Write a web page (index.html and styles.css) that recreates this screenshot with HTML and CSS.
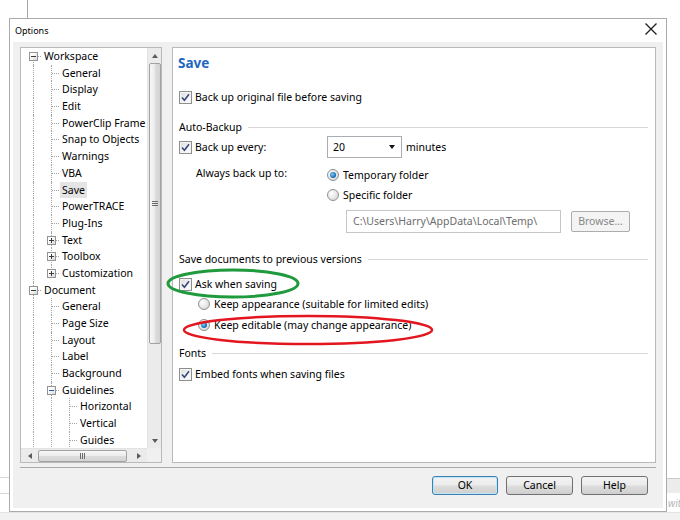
FILE: index.html
```html
<!DOCTYPE html>
<html>
<head>
<meta charset="utf-8">
<title>Options</title>
<link rel="stylesheet" href="styles.css">
</head>
<body>
<div class="bg-line"></div>
<div class="bg-left"></div>
<div class="bg-right"><span>wit</span></div>
<div class="bg-bottom"></div>

<div class="dialog">
  <div class="titlebar">
    <span class="title">Options</span>
    <svg class="close" width="12" height="12" viewBox="0 0 12 12"><path d="M0.5 0.5 L11.5 11.5 M11.5 0.5 L0.5 11.5" stroke="#1e1e1e" stroke-width="1.3" fill="none"/></svg>
  </div>
  <div class="client">
    <div class="main">
      <div class="tree">
        <div class="list">
          <div class="row"><span class="c vb h"><span class="bx"></span></span><span class="lbl">Workspace</span></div>
          <div class="row"><span class="c v"></span><span class="c v h"></span><span class="lbl">General</span></div>
          <div class="row"><span class="c v"></span><span class="c v h"></span><span class="lbl">Display</span></div>
          <div class="row"><span class="c v"></span><span class="c v h"></span><span class="lbl">Edit</span></div>
          <div class="row"><span class="c v"></span><span class="c v h"></span><span class="lbl">PowerClip Frame</span></div>
          <div class="row"><span class="c v"></span><span class="c v h"></span><span class="lbl">Snap to Objects</span></div>
          <div class="row"><span class="c v"></span><span class="c v h"></span><span class="lbl">Warnings</span></div>
          <div class="row"><span class="c v"></span><span class="c v h"></span><span class="lbl">VBA</span></div>
          <div class="row"><span class="c v"></span><span class="c v h"></span><span class="lbl sel">Save</span></div>
          <div class="row"><span class="c v"></span><span class="c v h"></span><span class="lbl">PowerTRACE</span></div>
          <div class="row"><span class="c v"></span><span class="c v h"></span><span class="lbl">Plug-Ins</span></div>
          <div class="row"><span class="c v"></span><span class="c v h"><span class="bx plus"></span></span><span class="lbl">Text</span></div>
          <div class="row"><span class="c v"></span><span class="c v h"><span class="bx plus"></span></span><span class="lbl">Toolbox</span></div>
          <div class="row"><span class="c v"></span><span class="c vt h"><span class="bx plus"></span></span><span class="lbl">Customization</span></div>
          <div class="row"><span class="c v h"><span class="bx"></span></span><span class="lbl">Document</span></div>
          <div class="row"><span class="c v"></span><span class="c v h"></span><span class="lbl">General</span></div>
          <div class="row"><span class="c v"></span><span class="c v h"></span><span class="lbl">Page Size</span></div>
          <div class="row"><span class="c v"></span><span class="c v h"></span><span class="lbl">Layout</span></div>
          <div class="row"><span class="c v"></span><span class="c v h"></span><span class="lbl">Label</span></div>
          <div class="row"><span class="c v"></span><span class="c v h"></span><span class="lbl">Background</span></div>
          <div class="row"><span class="c v"></span><span class="c v h"><span class="bx blue"></span></span><span class="lbl">Guidelines</span></div>
          <div class="row"><span class="c v"></span><span class="c v"></span><span class="c v h"></span><span class="lbl">Horizontal</span></div>
          <div class="row"><span class="c v"></span><span class="c v"></span><span class="c v h"></span><span class="lbl">Vertical</span></div>
          <div class="row"><span class="c v"></span><span class="c v"></span><span class="c v h"></span><span class="lbl">Guides</span></div>
        </div>
        <div class="vscroll">
          <div class="sarea"><span class="tri up"></span></div>
          <div class="vthumb"><span class="grip-h"></span></div>
          <div class="vspace"></div>
          <div class="sarea"><span class="tri down"></span></div>
        </div>
        <div class="hscroll">
          <div class="harea"><span class="tri left"></span></div>
          <div class="hthumb"><span class="grip-v"></span></div>
          <div class="hspace"></div>
          <div class="harea"><span class="tri right"></span></div>
        </div>
        <div class="corner"></div>
      </div>

      <div class="page">
        <div class="heading">Save</div>
        <div class="opt r-orig"><span class="cb"><svg width="11" height="11" viewBox="0 0 11 11"><path d="M2 5.5 L4.4 8.2 L9 2.2" stroke="#34457a" stroke-width="1.5" fill="none"/></svg></span><span>Back up original file before saving</span></div>
        <div class="grp g-auto"><span>Auto-Backup</span><i></i></div>
        <div class="every">
          <div class="opt every-cb"><span class="cb"><svg width="11" height="11" viewBox="0 0 11 11"><path d="M2 5.5 L4.4 8.2 L9 2.2" stroke="#34457a" stroke-width="1.5" fill="none"/></svg></span><span>Back up every:</span></div>
          <div class="combo"><span>20</span><b class="tri down dk"></b></div>
          <span class="unit">minutes</span>
        </div>
        <div class="always">
          <div class="always-lbl">Always back up to:</div>
          <div class="radios">
            <div class="opt"><span class="rb on"></span><span>Temporary folder</span></div>
            <div class="opt"><span class="rb"></span><span>Specific folder</span></div>
          </div>
        </div>
        <div class="folder">
          <div class="path">C:\Users\Harry\AppData\Local\Temp\</div>
          <div class="browse">Browse...</div>
        </div>
        <div class="grp g-save"><span>Save documents to previous versions</span><i></i></div>
        <div class="opt r-ask"><span class="cb"><svg width="11" height="11" viewBox="0 0 11 11"><path d="M2 5.5 L4.4 8.2 L9 2.2" stroke="#34457a" stroke-width="1.5" fill="none"/></svg></span><span>Ask when saving</span></div>
        <div class="opt r-keep"><span class="rb"></span><span>Keep appearance (suitable for limited edits)</span></div>
        <div class="opt r-keep r-keep2"><span class="rb on"></span><span>Keep editable (may change appearance)</span></div>
        <div class="grp g-fonts"><span>Fonts</span><i></i></div>
        <div class="opt r-embed"><span class="cb"><svg width="11" height="11" viewBox="0 0 11 11"><path d="M2 5.5 L4.4 8.2 L9 2.2" stroke="#34457a" stroke-width="1.5" fill="none"/></svg></span><span>Embed fonts when saving files</span></div>
      </div>
    </div>
    <div class="sep"></div>
    <div class="buttons">
      <div class="btn def">OK</div>
      <div class="btn">Cancel</div>
      <div class="btn">Help</div>
    </div>
  </div>
</div>

<svg class="marks" width="680" height="520" viewBox="0 0 680 520">
  <ellipse cx="233" cy="283.5" rx="65" ry="13.5" fill="none" stroke="#1f9a3c" stroke-width="3"/>
  <ellipse cx="308" cy="330" rx="124" ry="14" fill="none" stroke="#e3151f" stroke-width="2.5"/>
</svg>
</body>
</html>
```

FILE: styles.css
```css
* { box-sizing: border-box; }
html, body { margin: 0; padding: 0; }
body {
  width: 680px;
  height: 520px;
  overflow: hidden;
  position: relative;
  background: #fff;
  font-family: "Noto Sans", "DejaVu Sans", sans-serif;
  font-size: 10.5px;
  color: #000;
}

/* desktop behind the window */
.bg-line { position: absolute; left: 27px; top: 0; width: 1px; height: 18px; background: #a6a6a6; }
.bg-left { position: absolute; left: 0; top: 477px; width: 9px; height: 17px; border-top: 1px solid #d6d6d6; border-bottom: 1px solid #d6d6d6; }
.bg-right { position: absolute; left: 667px; top: 478px; width: 13px; height: 34px; overflow: hidden; border-top: 1px solid #c9c9c9; background: linear-gradient(#ececec 0, #ececec 14px, #fff 14px); }
.bg-right span { position: absolute; left: 1px; top: 18px; font-style: italic; color: #b5b5b5; font-size: 10px; line-height: 12px; }
.bg-bottom { position: absolute; left: 0; top: 512px; width: 680px; height: 8px; background: #f2f2f2; border-top: 1px solid #e2e2e2; }

/* window */
.dialog {
  position: absolute;
  left: 9px;
  top: 18px;
  width: 658px;
  height: 494px;
  border: 1px solid #ababab;
  background: #fff;
  display: flex;
  flex-direction: column;
}
.titlebar {
  height: 23px;
  flex: none;
  display: flex;
  align-items: center;
  justify-content: space-between;
  padding: 0 9px 1px 5px;
}
.title { font-size: 9px; color: #000; }
.close { display: block; margin-top: -2px; }

.client {
  flex: 1;
  margin: 0 3px 3px 3px;
  background: #f0f0f0;
  padding: 5px 7px 0 7px;
  display: flex;
  flex-direction: column;
}
.main { display: flex; height: 416px; gap: 10px; flex: none; }

/* tree */
.tree {
  width: 142px;
  flex: none;
  border: 1px solid #b9b9b9;
  background: #fff;
  display: grid;
  grid-template-columns: 126px 14px;
  grid-template-rows: 400px 14px;
}
.list { overflow: hidden; padding-left: 3px; }
.row { display: flex; height: 16.7px; white-space: nowrap; }
.c { width: 18px; flex: none; position: relative; }
.c.v::before, .c.vt::before, .c.vb::before {
  content: ""; position: absolute; left: 9px; border-left: 1px dotted #a3a3a3;
}
.c.v::before { top: 0; bottom: 0; }
.c.vt::before { top: 0; height: 9px; }
.c.vb::before { top: 8px; bottom: 0; }
.c.h::after {
  content: ""; position: absolute; left: 10px; width: 7px; top: 8px; border-top: 1px dotted #a3a3a3;
}
.bx {
  position: absolute; left: 5px; top: 4px; width: 9px; height: 9px; z-index: 1;
  border: 1px solid #939393;
  background: linear-gradient(135deg, #ffffff 30%, #d8d8d8);
}
.bx::before { content: ""; position: absolute; left: 1px; top: 3px; width: 5px; height: 1px; background: #3a3a3a; }
.bx.plus::after { content: ""; position: absolute; left: 3px; top: 1px; width: 1px; height: 5px; background: #3a3a3a; }
.bx.blue::before { background: #2c57a8; }
.lbl { line-height: 16.7px; padding: 0 2px; }
.lbl.sel { background: #e4e4e4; }

.vscroll {
  background: #ebebeb;
  border-left: 1px solid #e3e3e3;
  display: flex;
  flex-direction: column;
  align-items: center;
}
.sarea { height: 15px; width: 100%; flex: none; display: flex; align-items: center; justify-content: center; }
.vthumb {
  width: 12px; height: 281px; flex: none;
  border: 1px solid #a2a2a2; border-radius: 2px;
  background: linear-gradient(to right, #f7f7f7, #ececec 45%, #dcdcdc 55%, #d4d4d4);
  display: flex; align-items: center; justify-content: center;
}
.grip-h { width: 6px; height: 5px; border-top: 1px solid #6a6a6a; border-bottom: 1px solid #6a6a6a; position: relative; }
.grip-h::after { content: ""; position: absolute; left: 0; right: 0; top: 1px; border-top: 1px solid #6a6a6a; }
.vspace { flex: 1; }
.hscroll {
  background: #ebebeb;
  border-top: 1px solid #e3e3e3;
  display: flex;
  align-items: center;
}
.harea { width: 17px; height: 100%; flex: none; display: flex; align-items: center; justify-content: center; }
.hthumb {
  width: 89px; height: 12px; flex: none;
  border: 1px solid #a2a2a2; border-radius: 2px;
  background: linear-gradient(#f7f7f7, #ececec 45%, #dcdcdc 55%, #d4d4d4);
  display: flex; align-items: center; justify-content: center;
}
.grip-v { width: 5px; height: 6px; border-left: 1px solid #6a6a6a; border-right: 1px solid #6a6a6a; position: relative; }
.grip-v::after { content: ""; position: absolute; top: 0; bottom: 0; left: 1px; border-left: 1px solid #6a6a6a; }
.hspace { flex: 1; }
.corner { background: #f0f0f0; }

.tri { width: 0; height: 0; display: block; }
.tri.up { border-left: 3.5px solid transparent; border-right: 3.5px solid transparent; border-bottom: 4px solid #5a5a5a; }
.tri.down { border-left: 3.5px solid transparent; border-right: 3.5px solid transparent; border-top: 4px solid #5a5a5a; }
.tri.left { border-top: 3.5px solid transparent; border-bottom: 3.5px solid transparent; border-right: 4px solid #5a5a5a; }
.tri.right { border-top: 3.5px solid transparent; border-bottom: 3.5px solid transparent; border-left: 4px solid #5a5a5a; }
.tri.down.dk { border-top-color: #111; border-left-width: 3.5px; border-right-width: 3.5px; }

/* right page */
.page {
  flex: 1;
  border: 1px solid #b9b9b9;
  background: #fff;
  padding: 0 7px 0 0;
  display: flex;
  flex-direction: column;
}
.heading {
  height: 30px; line-height: 30px; margin-left: 5px;
  font-weight: bold; font-size: 13.5px; color: #1e66c0;
}
.opt { display: flex; align-items: center; height: 20px; white-space: nowrap; flex: none; }
.cb {
  width: 13px; height: 13px; flex: none; margin-left: 6px; margin-right: 3px;
  border: 1px solid #8e8f8f;
  background: linear-gradient(135deg, #dcdcdc, #f8f8f8 70%);
  display: flex; align-items: center; justify-content: center;
  box-shadow: inset 0 0 0 1px #f4f4f4;
}
.cb svg { display: block; }
.rb {
  width: 12px; height: 12px; flex: none; margin-right: 4px;
  border: 1px solid #8e8f8f; border-radius: 50%;
  background: radial-gradient(circle at 35% 35%, #ffffff, #d9d9d9 80%);
  display: flex; align-items: center; justify-content: center;
}
.rb.on::after {
  content: ""; width: 6px; height: 6px; border-radius: 50%;
  background: radial-gradient(circle at 40% 40%, #7fd0f7, #1a6fba 60%, #0d4f8e);
}
.r-orig { margin-top: 9px; }
.grp { display: flex; align-items: center; height: 20px; margin-left: 6px; flex: none; }
.grp i { flex: 1; border-top: 1px solid #d8d8d8; margin-left: 6px; margin-top: 1px; }
.g-auto { margin-top: 10px; height: 19px; }
.every { display: flex; align-items: center; height: 22px; flex: none; }
.every-cb { width: 154px; }
.combo {
  width: 75px; height: 22px; border: 1px solid #abadb3; background: #fff;
  display: flex; align-items: center; justify-content: space-between;
  padding: 0 6px 0 5px;
}
.unit { margin-left: 4px; }
.always { display: flex; margin-top: 7px; flex: none; }
.always-lbl { width: 131px; margin-left: 23px; line-height: 16px; margin-top: 0; }
.radios { display: flex; flex-direction: column; }
.folder { display: flex; align-items: center; margin-top: 5px; margin-left: 173px; flex: none; }
.path {
  width: 215px; height: 23px; border: 1px solid #c5c5c5; background: #fff;
  color: #6d6d6d; padding-left: 6px; line-height: 21px; white-space: nowrap;
}
.browse {
  width: 59px; height: 21px; margin-left: 10px;
  border: 1px solid #adadad; border-radius: 2px; background: #f4f4f4;
  color: #888; text-align: center; line-height: 19px;
}
.g-save { margin-top: 16px; }
.r-ask { margin-top: 5px; }
.r-keep .rb { margin-left: 25px; }
.r-keep2 { margin-top: 1px; }
.g-fonts { margin-top: 8px; }
.r-embed { margin-top: 1px; }

/* bottom */
.sep { margin-top: 4px; border-top: 1px solid #a9a9a9; flex: none; }
.buttons { display: flex; justify-content: flex-end; gap: 8px; margin-top: 8px; padding-right: 8px; flex: none; }
.btn {
  width: 67px; height: 19px; line-height: 17px; text-align: center;
  border: 1px solid #707070; border-radius: 3px;
  background: linear-gradient(#f3f3f3 0%, #ebebeb 48%, #dddddd 52%, #cfcfcf 100%);
}
.btn.def { width: 66px; border-color: #3c7fb1; box-shadow: inset 0 0 0 1px #bfe6f8; }

.marks { position: absolute; left: 0; top: 0; pointer-events: none; }
```
